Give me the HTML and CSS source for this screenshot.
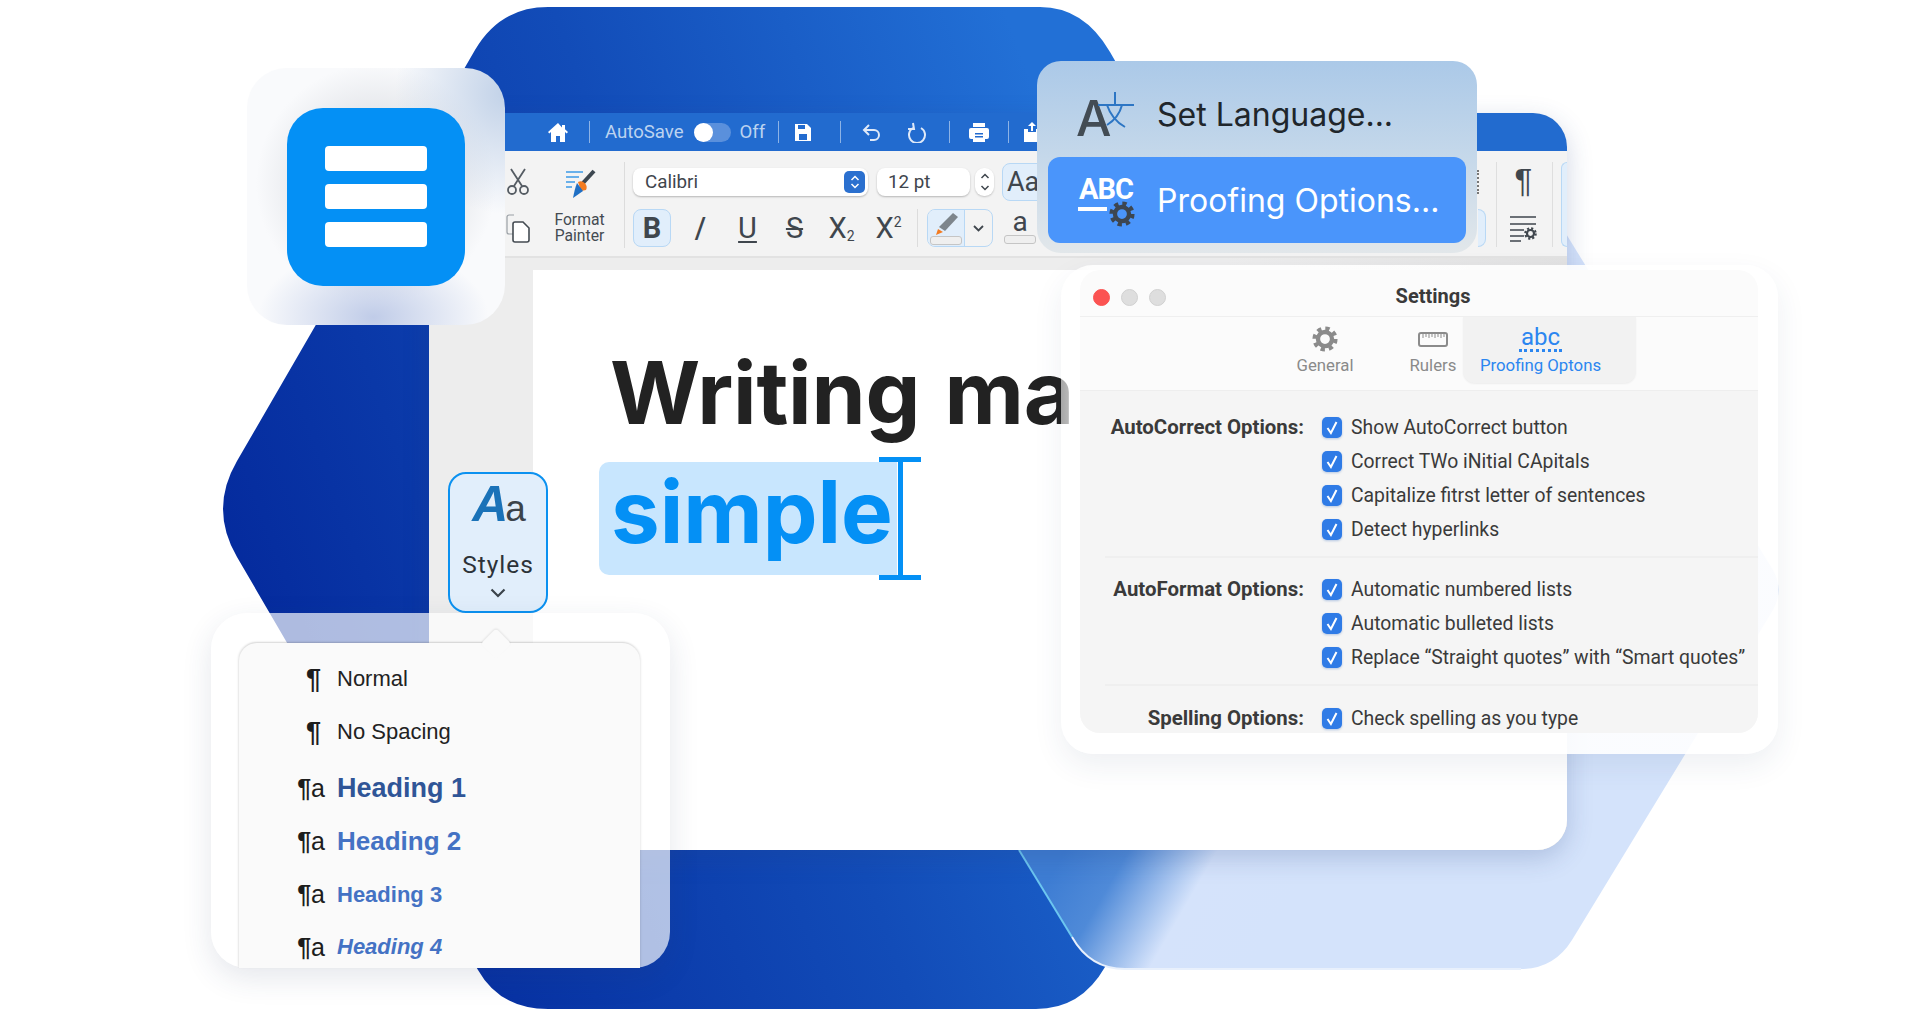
FILE: index.html
```html
<!DOCTYPE html>
<html lang="en">
<head>
    <meta charset="UTF-8">
    <meta name="viewport" content="width=device-width, initial-scale=1.0">
    <title>Writing made simple</title>
    <link rel="stylesheet" href="styles.css">
</head>
<body>
    <svg class="defs" width="0" height="0">
        <symbol id="gear" viewBox="0 0 24 24">
            <circle cx="12" cy="12" r="6.5" fill="none" stroke="currentColor" stroke-width="4"></circle>
            <circle cx="12" cy="12" r="9.6" fill="none" stroke="currentColor" stroke-width="4" stroke-dasharray="3.9 3.64"></circle>
        </symbol>
        <symbol id="check" viewBox="0 0 20 21">
            <rect x="0" y="0" width="20" height="21" rx="5" fill="#2f7be6"></rect>
            <path d="M5.5 11l3.4 5 5.6-11" fill="none" stroke="#fff" stroke-width="2"></path>
        </symbol>
    </svg>

    <div class="stage">
        <svg class="shapes" width="1920" height="1018" viewBox="0 0 1920 1018">
            <defs>
                <linearGradient id="darkHex" gradientUnits="userSpaceOnUse" x1="223" y1="620" x2="1110" y2="300">
                    <stop offset="0" stop-color="#04299c"></stop>
                    <stop offset="0.55" stop-color="#124cb8"></stop>
                    <stop offset="1" stop-color="#2270d6"></stop>
                </linearGradient>
                <linearGradient id="glassHex" gradientUnits="userSpaceOnUse" x1="1060" y1="860" x2="1250" y2="970">
                    <stop offset="0" stop-color="#3e7dd3"></stop>
                    <stop offset="0.25" stop-color="#4f8ad8"></stop>
                    <stop offset="0.6" stop-color="#d5e3fb"></stop>
                    <stop offset="1" stop-color="#d4e3fb"></stop>
                </linearGradient>
            </defs>
            <path fill="url(#darkHex)" d="M548 7L1040 7Q1084 7 1110 52L1350 470L1350 540L1105 967Q1081 1009 1036 1009L548 1009Q500 1009 478 970L237 557Q209 509 237 461L475 50Q500 7 548 7Z"></path>
            <path fill="url(#glassHex)" d="M1560 224L1773 570Q1784 590 1773 610L1572 940Q1554 969 1521 969L1125 969Q1090 969 1072 937L1010 835L1010 224Z"></path>
            <path fill="none" stroke="#6cc6f0" stroke-width="2" d="M1019 850L1072 937"></path>
            <path fill="none" stroke="#e8f0fc" stroke-width="2" d="M1072 937Q1090 969 1125 969L1521 969"></path>
        </svg>

        <div class="window">
            <div class="titlebar">
                <svg class="tb-home" width="22" height="21" viewBox="0 0 22 21"><path fill="#fff" d="M11 1L1 10l1.3 1.5L4 10v10h5v-6h4v6h5V10l1.7 1.5L21 10l-3-2.700V3h-3v2.600z"></path></svg>
                <span class="tb-sep tb-gap-a"></span>
                <span class="tb-label">AutoSave</span>
                <span class="toggle"><span class="toggle-knob"></span></span>
                <span class="tb-label tb-off">Off</span>
                <span class="tb-sep tb-gap-b"></span>
                <svg class="tb-save" width="18" height="19" viewBox="0 0 18 19"><path fill="#fff" d="M1 1h12l4 4v13H1z"></path><path fill="#226bcf" d="M4 2h7v4H4zM5 11h8v6H5z"></path></svg>
                <span class="tb-sep tb-gap-c"></span>
                <svg class="tb-undo" width="22" height="21" viewBox="0 0 22 21"><path fill="none" stroke="#dfe9f8" stroke-width="2" d="M8 3L3 8l5 5M3 8h10a5 5 0 0 1 0 10h-4"></path></svg>
                <svg class="tb-redo" width="22" height="21" viewBox="0 0 22 21"><path fill="none" stroke="#dfe9f8" stroke-width="2" d="M7 6a8 8 0 1 0 8 0M7 1l1 6 -6 0"></path></svg>
                <span class="tb-sep tb-gap-d"></span>
                <svg class="tb-print" width="22" height="21" viewBox="0 0 22 21"><path fill="#fff" d="M5 1h12v4H5zM3 6h16a2 2 0 0 1 2 2v7a2 2 0 0 1-2 2h-2v3H5v-3H3a2 2 0 0 1-2-2V8a2 2 0 0 1 2-2z"></path><path fill="#226bcf" d="M7 11h8v1.500H7zM7 14h8v1.500H7z"></path></svg>
                <span class="tb-sep tb-gap-e"></span>
                <svg class="tb-share" width="20" height="21" viewBox="0 0 20 21"><path fill="#fff" d="M2 7h4v3h8V7h4v13H2zM10 0l4 4h-3v5H9V4H6z"></path></svg>
            </div>

            <div class="ribbon">
                <div class="rb-clipboard">
                    <svg class="rb-scissors" width="22" height="27" viewBox="0 0 22 27" fill="none" stroke="#555c63" stroke-width="1.800"><path d="M4 1l11 17M18 1L7 18"></path><circle cx="5" cy="22" r="4"></circle><circle cx="17" cy="22" r="4"></circle></svg>
                    <svg class="rb-brush" width="32" height="30" viewBox="0 0 32 30"><path stroke="#3c9be8" stroke-width="1.500" d="M1 3h17M1 8h13M1 13h9M1 18h6"></path><path stroke="#3d4750" stroke-width="4" d="M29 2L18 14"></path><path fill="#f47b20" d="M13 13a6 6 0 0 1 8 8l-5 1z"></path><path fill="#1f6fc4" d="M12 14l6 8-10 7c1-5 2-10 4-15z"></path></svg>
                    <svg class="rb-copy" width="24" height="29" viewBox="0 0 24 29"><path fill="none" stroke="#9aa0a6" stroke-width="1.200" d="M8 1H3a2 2 0 0 0-2 2v15a2 2 0 0 0 2 2h4"></path><path fill="#fff" stroke="#444b52" stroke-width="1.600" d="M9 8h8l6 6v12a2 2 0 0 1-2 2H9a2 2 0 0 1-2-2V10a2 2 0 0 1 2-2z"></path></svg>
                    <div class="rb-painter">Format<br>Painter</div>
                </div>

                <div class="rb-font">
                    <div class="rb-row rb-row-top">
                        <div class="font-select">
                            <span>Calibri</span>
                            <span class="select-btn">
                                <svg width="10" height="16" viewBox="0 0 10 16" fill="none" stroke="#fff" stroke-width="1.500"><path d="M1.500 6L5 2.500 8.500 6M1.500 10L5 13.500 8.500 10"></path></svg>
                            </span>
                        </div>
                        <div class="size-select">12 pt</div>
                        <div class="stepper">
                            <svg width="10" height="22" viewBox="0 0 10 22" fill="none" stroke="#3f464d" stroke-width="1.500"><path d="M1.500 7L5 3.500 8.500 7M1.500 15L5 18.500 8.500 15"></path></svg>
                        </div>
                        <div class="case-btn">Aa</div>
                    </div>
                    <div class="rb-row rb-row-bottom">
                        <div class="fmt fmt-bold">B</div>
                        <div class="fmt fmt-italic">/</div>
                        <div class="fmt fmt-under">U</div>
                        <div class="fmt fmt-strike">S</div>
                        <div class="fmt">X<sub>2</sub></div>
                        <div class="fmt">X<sup>2</sup></div>
                        <span class="rb-sep"></span>
                        <div class="highlight">
                            <div class="highlight-pen">
                                <svg width="26" height="25" viewBox="0 0 26 25"><path fill="#7d858c" d="M20 1l5 4-13 14-6-4z"></path><path fill="#f47b20" d="M5 17l5 3-7 3z"></path></svg>
                                <span class="swatch"></span>
                            </div>
                            <div class="highlight-more">
                                <svg width="11" height="7" viewBox="0 0 11 7" fill="none" stroke="#3f464d" stroke-width="1.800"><path d="M1 1l4.500 4.500L10 1"></path></svg>
                            </div>
                        </div>
                        <div class="font-color">a<span class="swatch"></span></div>
                    </div>
                </div>

                <div class="rb-tail">
                    <div class="tail-dots"></div>
                    <div class="tail-btn"></div>
                    <span class="tail-sep"></span>
                    <div class="tail-col">
                        <span class="tail-pilcrow">¶</span>
                        <svg width="28" height="27" viewBox="0 0 28 27"><path stroke="#3f464d" stroke-width="1.500" d="M1 2h26M1 9h26M1 15h14M1 21h14M1 26h11"></path><use href="#gear" x="15" y="12" width="13" height="13" color="#3f464d"></use></svg>
                    </div>
                    <span class="tail-sep"></span>
                    <div class="tail-outline"></div>
                </div>
            </div>

            <div class="workspace">
                <div class="page">
                    <h1 class="doc-title">Writing ma</h1>
                    <div class="doc-line">
                        <span class="selection">simple<span class="caret"></span></span>
                    </div>
                </div>
            </div>
        </div>

        <div class="app-tile">
            <div class="app-icon">
                <span class="app-bar"></span>
                <span class="app-bar"></span>
                <span class="app-bar"></span>
            </div>
        </div>

        <div class="lang-menu">
            <div class="menu-item menu-item-plain">
                <span class="menu-icon">
                    <span class="translate-a">A</span>
                    <svg class="translate-mark" width="40" height="40" viewBox="0 0 40 40" fill="none" stroke="#2d76c4" stroke-width="2"><path d="M19 2v13M2 15h36M11 15c3 9 9 17 18 22M26 15c-2 8-7 15-15 20"></path></svg>
                </span>
                <span>Set Language...</span>
            </div>
            <div class="menu-item menu-item-active">
                <span class="menu-icon">
                    <span class="abc-text">ABC</span>
                    <span class="abc-rule"></span>
                    <svg class="abc-gear" width="26" height="26"><use href="#gear" width="26" height="26" color="#3d4650"></use></svg>
                </span>
                <span>Proofing Options...</span>
            </div>
        </div>

        <div class="settings">
            <div class="settings-inner">
                <div class="settings-title">
                    <div class="lights">
                        <span class="light light-red"></span>
                        <span class="light"></span>
                        <span class="light"></span>
                    </div>
                    <span>Settings</span>
                </div>
                <div class="tabs">
                    <div class="tab tab-general">
                        <svg width="26" height="26"><use href="#gear" width="26" height="26" color="#8b8b8b"></use></svg>
                        <span>General</span>
                    </div>
                    <div class="tab tab-rulers">
                        <svg width="30" height="26" viewBox="0 0 30 26" fill="none" stroke="#8b8b8b"><rect x="1" y="7" width="28" height="13" rx="2" stroke-width="2"></rect><path stroke-width="1" d="M5 8v4M8 8v3M11 8v4M14 8v3M17 8v4M20 8v3M23 8v4M26 8v3"></path></svg>
                        <span>Rulers</span>
                    </div>
                    <div class="tab tab-proofing">
                        <div class="abc-tab">abc</div>
                        <span>Proofing Optons</span>
                    </div>
                </div>
                <div class="options">
                    <section class="opt-group opt-first">
                        <div class="opt-label">AutoCorrect Options:</div>
                        <div class="opt-list">
                            <div class="opt"><svg class="tick"><use href="#check"></use></svg>Show AutoCorrect button</div>
                            <div class="opt"><svg class="tick"><use href="#check"></use></svg>Correct TWo iNitial CApitals</div>
                            <div class="opt"><svg class="tick"><use href="#check"></use></svg>Capitalize fitrst letter of sentences</div>
                            <div class="opt"><svg class="tick"><use href="#check"></use></svg>Detect hyperlinks</div>
                        </div>
                    </section>
                    <section class="opt-group opt-second">
                        <div class="opt-label">AutoFormat Options:</div>
                        <div class="opt-list">
                            <div class="opt"><svg class="tick"><use href="#check"></use></svg>Automatic numbered lists</div>
                            <div class="opt"><svg class="tick"><use href="#check"></use></svg>Automatic bulleted lists</div>
                            <div class="opt"><svg class="tick"><use href="#check"></use></svg>Replace “Straight quotes” with “Smart quotes”</div>
                        </div>
                    </section>
                    <section class="opt-group opt-third">
                        <div class="opt-label">Spelling Options:</div>
                        <div class="opt-list">
                            <div class="opt"><svg class="tick"><use href="#check"></use></svg>Check spelling as you type</div>
                        </div>
                    </section>
                </div>
            </div>
        </div>

        <div class="styles-btn">
            <div class="styles-aa"><span class="big-a">A</span><span class="small-a">a</span></div>
            <div class="styles-label">Styles</div>
            <svg width="16" height="10" viewBox="0 0 16 10" fill="none" stroke="#3b434a" stroke-width="2.200"><path d="M1.500 1.500L8 8l6.500-6.500"></path></svg>
        </div>

        <div class="styles-pop">
            <div class="styles-card">
                <span class="card-arrow"></span>
                <div class="style-row"><span class="mark mark-plain"><b>¶</b></span><span class="st-normal">Normal</span></div>
                <div class="style-row"><span class="mark mark-plain"><b>¶</b></span><span class="st-normal">No Spacing</span></div>
                <div class="style-row style-row-first"><span class="mark"><b>¶</b>a</span><span class="st-h1">Heading 1</span></div>
                <div class="style-row"><span class="mark"><b>¶</b>a</span><span class="st-h2">Heading 2</span></div>
                <div class="style-row"><span class="mark"><b>¶</b>a</span><span class="st-h3">Heading 3</span></div>
                <div class="style-row"><span class="mark"><b>¶</b>a</span><span class="st-h4">Heading 4</span></div>
            </div>
        </div>
    </div>
</body>
</html>
```

FILE: styles.css
```css
* {
    margin: 0;
    padding: 0;
    box-sizing: border-box;
}

body {
    font-family: Roboto, "Liberation Sans", sans-serif;
    background: #ffffff;
    color: #222222;
    overflow: hidden;
}

.defs {
    position: absolute;
}

.stage {
    position: relative;
    width: 1920px;
    height: 1018px;
    overflow: hidden;
}

.shapes {
    position: absolute;
    top: 0;
    left: 0;
}

/* document window */
.window {
    position: absolute;
    left: 429px;
    top: 113px;
    width: 1138px;
    height: 737px;
    display: flex;
    flex-direction: column;
    background: #ececec;
    border-radius: 0 34px 30px 0;
    box-shadow: 0 8px 26px rgba(40, 70, 130, 0.22);
}

.titlebar {
    height: 38px;
    display: flex;
    align-items: center;
    padding-left: 118px;
    background: #226bcf;
    border-radius: 0 34px 0 0;
}

.tb-sep {
    width: 1px;
    height: 22px;
    background: #8db3e6;
}

.tb-gap-a { margin-left: 20px; }
.tb-gap-b { margin-left: 13px; }
.tb-gap-c { margin-left: 28px; }
.tb-gap-d { margin-left: 21px; }
.tb-gap-e { margin-left: 18px; }

.tb-label {
    font-size: 18.600px;
    color: #bcd3f0;
    margin-left: 15px;
}

.tb-off {
    margin-left: 9px;
}

.toggle {
    width: 37px;
    height: 19px;
    margin-left: 10px;
    border-radius: 10px;
    background: #5a90dc;
}

.toggle-knob {
    display: block;
    width: 19px;
    height: 19px;
    border-radius: 50%;
    background: #ffffff;
}

.tb-save { margin-left: 15px; }
.tb-undo { margin-left: 20px; }
.tb-redo { margin-left: 23px; }
.tb-print { margin-left: 18px; }
.tb-share { margin-left: 13px; }

/* ribbon */
.ribbon {
    height: 107px;
    display: flex;
    padding-left: 76px;
    background: #f3f3f3;
    border-bottom: 2px solid #e2e2e2;
    color: #3f464d;
}

.rb-clipboard {
    width: 120px;
    height: 86px;
    margin-top: 11px;
    flex: none;
    display: grid;
    grid-template-columns: 26px 94px;
    grid-template-rows: 1fr 1fr;
    justify-items: center;
    align-items: center;
    border-right: 1px solid #dcdcdc;
}

.rb-scissors {
    margin-bottom: 4px;
}

.rb-brush {
    margin-left: 6px;
}

.rb-copy {
    margin-top: 3px;
}

.rb-painter {
    font-size: 15.700px;
    line-height: 16px;
    text-align: center;
    color: #444b52;
    margin-top: 2px;
    margin-left: 3px;
}

.rb-font {
    margin-left: 8px;
    width: 419px;
    flex: none;
}

.rb-row {
    display: flex;
    align-items: center;
}

.rb-row > * {
    flex: none;
}

.rb-row-top {
    height: 38px;
    margin-top: 12px;
}

.rb-row-bottom {
    margin-top: 8px;
    height: 38px;
}

.font-select {
    width: 235px;
    height: 28px;
    display: flex;
    align-items: center;
    justify-content: space-between;
    padding: 0 3px 0 12px;
    font-size: 18.800px;
    background: #ffffff;
    border-radius: 8px;
    box-shadow: 0 1px 2px rgba(0, 0, 0, 0.25);
}

.select-btn {
    width: 21px;
    height: 22px;
    display: flex;
    align-items: center;
    justify-content: center;
    background: #2b70cf;
    border-radius: 5px;
}

.size-select {
    width: 93px;
    height: 28px;
    margin-left: 9px;
    padding-left: 11px;
    font-size: 18.800px;
    line-height: 28px;
    background: #ffffff;
    border-radius: 8px;
    box-shadow: 0 1px 2px rgba(0, 0, 0, 0.25);
}

.stepper {
    width: 19px;
    height: 28px;
    margin-left: 5px;
    display: flex;
    align-items: center;
    justify-content: center;
    background: #ffffff;
    border-radius: 9px;
    box-shadow: 0 1px 2px rgba(0, 0, 0, 0.2);
}

.case-btn {
    width: 50px;
    height: 38px;
    margin-left: 8px;
    padding-left: 4px;
    font-size: 27px;
    line-height: 36px;
    background: #e1eefb;
    border: 1px solid #b8d8f5;
    border-radius: 8px;
}

.fmt {
    width: 47px;
    text-align: center;
    font-size: 29px;
    line-height: 38px;
}

.fmt sub,
.fmt sup {
    font-size: 14px;
    line-height: 0;
}

.fmt sub {
    vertical-align: -3px;
}

.fmt-bold {
    width: 38px;
    margin-right: 6px;
    font-weight: 700;
    background: #e1eefb;
    border: 1px solid #b8d8f5;
    border-radius: 8px;
    line-height: 36px;
}

.fmt-italic {
    font-weight: 500;
}

.fmt-under {
    text-decoration: underline;
    text-decoration-thickness: 2px;
    text-underline-offset: 3px;
}

.fmt-strike {
    text-decoration: line-through;
    text-decoration-thickness: 2px;
}

.rb-sep {
    width: 1px;
    height: 38px;
    margin-left: 5px;
    background: #dcdcdc;
}

.highlight {
    width: 66px;
    height: 38px;
    margin-left: 9px;
    display: flex;
    border: 1px solid #b8d8f5;
    border-radius: 8px;
    overflow: hidden;
}

.highlight-pen {
    width: 37px;
    padding: 2px 2px 0;
    display: flex;
    flex-direction: column;
    align-items: center;
    background: #e1eefb;
    border-right: 1px solid #b8d8f5;
}

.highlight-pen .swatch {
    margin-top: -1px;
}

.swatch {
    display: block;
    width: 32px;
    height: 9px;
    background: #efefef;
    border: 1px solid #c5c5c5;
    border-radius: 3px;
}

.highlight-more {
    flex: 1;
    display: flex;
    align-items: center;
    justify-content: center;
}

.font-color {
    width: 34px;
    margin-left: 10px;
    display: flex;
    flex-direction: column;
    align-items: center;
    font-size: 28px;
    line-height: 27px;
    margin-top: -4px;
}

.rb-tail {
    position: relative;
    display: flex;
    margin-left: auto;
    width: 90px;
    height: 85px;
    margin-top: 11px;
    flex: none;
}

.tail-dots {
    width: 1px;
    height: 24px;
    margin-top: 8px;
    border-left: 2px dotted #777777;
}

.tail-btn {
    width: 8px;
    height: 38px;
    margin-top: 47px;
    margin-left: -1px;
    background: #e1eefb;
    border: 1px solid #b8d8f5;
    border-left: 0;
    border-radius: 0 8px 8px 0;
}

.tail-sep {
    width: 1px;
    height: 85px;
    margin-left: 10px;
    background: #dedede;
}

.tail-col {
    width: 51px;
    padding: 0 0 5px 4px;
    display: flex;
    flex-direction: column;
    align-items: center;
    justify-content: space-between;
}

.tail-pilcrow {
    font-family: "Liberation Sans", sans-serif;
    font-size: 33px;
    line-height: 38px;
}

.tail-sep + .tail-col + .tail-sep {
    margin-left: 6px;
}

.tail-outline {
    width: 6px;
    margin-left: 8px;
    background: #e1eefb;
    border: 1px solid #b8d8f5;
    border-right: 0;
    border-radius: 8px 0 0 8px;
}

/* page */
.workspace {
    flex: 1;
    padding: 12px 0 0 104px;
    min-height: 0;
    background: linear-gradient(90deg, #ededed 70%, #e2e2e2 100%);
    border-radius: 0 0 30px 0;
}

.page {
    height: 100%;
    padding-left: 77px;
    background: #ffffff;
    border-radius: 0 0 30px 0;
}

.doc-title {
    font-family: Inter, sans-serif;
    font-size: 87px;
    font-weight: 700;
    line-height: 100px;
    letter-spacing: -0.200px;
    word-spacing: 4px;
    padding-top: 73px;
    color: #222222;
}

.doc-line {
    margin: 19px 0 0 -11px;
}

.selection {
    position: relative;
    display: block;
    width: 298px;
    height: 113px;
    padding-left: 12px;
    font-family: Inter, sans-serif;
    font-size: 87px;
    font-weight: 700;
    line-height: 100px;
    color: #0490f5;
    background: #c8e6fe;
    border-radius: 10px 0 0 10px;
}

.caret {
    position: absolute;
    left: 299px;
    top: -5px;
    width: 5px;
    height: 123px;
    background: #0490f5;
}

.caret::before,
.caret::after {
    content: "";
    position: absolute;
    left: -19px;
    width: 42px;
    height: 5px;
    background: #0490f5;
}

.caret::before { top: 0; }
.caret::after { bottom: 0; }

/* app tile */
.app-tile {
    position: absolute;
    left: 247px;
    top: 68px;
    width: 258px;
    height: 257px;
    display: flex;
    align-items: center;
    justify-content: center;
    padding-right: 1px;
    border-radius: 40px;
    background:
        radial-gradient(ellipse 115px 70px at 49% 97%, #c0cce8 0%, rgba(192, 204, 232, 0) 100%),
        radial-gradient(ellipse 110px 120px at 100% 10%, #c2d2e8 0%, rgba(194, 210, 232, 0) 100%),
        radial-gradient(ellipse 120px 120px at 50% 45%, #e6e8ec 60%, rgba(230, 232, 236, 0) 100%),
        #f9fafc;
}

.app-icon {
    width: 178px;
    height: 178px;
    display: flex;
    flex-direction: column;
    align-items: center;
    justify-content: center;
    gap: 13px;
    background: #0490f5;
    border-radius: 36px;
}

.app-bar {
    width: 102px;
    height: 25px;
    background: #ffffff;
    border-radius: 4px;
}

/* language menu */
.lang-menu {
    position: absolute;
    left: 1037px;
    top: 61px;
    width: 440px;
    height: 192px;
    padding: 9px 11px 10px;
    font-family: Inter, sans-serif;
    font-size: 32px;
    color: #20262b;
    background: linear-gradient(180deg, #abc9e8 0%, #c5d8ea 50%, #e2e7ea 100%);
    border-radius: 24px;
}

.menu-item {
    height: 87px;
    display: flex;
    align-items: center;
    gap: 24px;
    padding-left: 30px;
}

.menu-item-plain {
    padding-top: 2px;
}

.menu-item-active {
    height: 86px;
    color: #ffffff;
    background: #4a95fb;
    border-radius: 12px;
}

.menu-icon {
    position: relative;
    width: 55px;
    height: 50px;
    flex: none;
}

.translate-a {
    position: absolute;
    left: -2px;
    top: 0;
    font-size: 50px;
    line-height: 56px;
    font-weight: 500;
    color: #434c54;
}

.translate-mark {
    position: absolute;
    left: 18px;
    top: 0;
}

.abc-text {
    position: absolute;
    left: 1px;
    top: -3px;
    font-family: Roboto, sans-serif;
    font-size: 29px;
    line-height: 34px;
    font-weight: 700;
    letter-spacing: -1px;
    color: #ffffff;
}

.abc-rule {
    position: absolute;
    left: 0;
    top: 32px;
    width: 29px;
    height: 4px;
    background: #ffffff;
}

.abc-gear {
    position: absolute;
    left: 31px;
    top: 26px;
}

/* settings window */
.settings {
    position: absolute;
    left: 1061px;
    top: 265px;
    width: 717px;
    height: 489px;
    padding: 5px 20px 21px 19px;
    background: linear-gradient(90deg, rgba(255, 255, 255, 0.6) 0, rgba(255, 255, 255, 0.9) 30px);
    border-radius: 32px;
    box-shadow: 0 12px 30px rgba(40, 60, 100, 0.08);
}

.settings-inner {
    height: 100%;
    display: flex;
    flex-direction: column;
    background: #fbfbfb;
    border-radius: 20px 20px 20px 20px;
    overflow: hidden;
}

.settings-title {
    position: relative;
    height: 47px;
    flex: none;
    display: flex;
    align-items: center;
    justify-content: center;
    padding: 5px 0 0 28px;
    font-size: 20px;
    font-weight: 700;
    color: #3a3a3a;
    border-bottom: 1px solid #efefef;
}

.lights {
    position: absolute;
    left: 13px;
    top: 19px;
    display: flex;
    gap: 11px;
}

.light {
    width: 17px;
    height: 17px;
    border-radius: 50%;
    background: #dedede;
    border: 1px solid #d0d0d0;
}

.light-red {
    background: #fb5352;
    border-color: #fb5352;
}

.tabs {
    position: relative;
    height: 74px;
    flex: none;
    font-size: 16.800px;
    color: #8a8a8a;
    border-bottom: 1px solid #eeeeee;
}

.tab {
    position: absolute;
    top: 0;
    height: 66px;
    display: flex;
    flex-direction: column;
    align-items: center;
    justify-content: flex-end;
    gap: 3px;
    padding-bottom: 8px;
}

.tab-general {
    left: 199px;
    width: 92px;
}

.tab-rulers {
    left: 316px;
    width: 74px;
}

.tab-proofing {
    left: 383px;
    width: 173px;
    padding-right: 18px;
    color: #2b86f0;
    background: #f2f2f2;
    border-radius: 0 0 12px 12px;
    box-shadow: 0 1px 2px rgba(0, 0, 0, 0.06);
}

.abc-tab {
    font-size: 24px;
    line-height: 24px;
    padding: 0 2px;
    border-bottom: 3px dotted #2b86f0;
}

.options {
    flex: 1;
    min-height: 0;
    background: #f5f5f5;
    font-size: 19.350px;
    color: #3a3a3a;
}

.opt-group {
    display: grid;
    grid-template-columns: 224px 1fr;
    column-gap: 18px;
    margin-left: 25px;
    border-bottom: 2px solid #efefef;
}

.opt-group .opt-label {
    margin-left: -25px;
    font-size: 20.400px;
    line-height: 34px;
    text-align: right;
    font-weight: 700;
    white-space: nowrap;
}

.opt-first {
    padding: 19px 0 10px;
    grid-template-columns: 199px 1fr;
}

.opt-second {
    padding: 14px 0 10px;
    grid-template-columns: 199px 1fr;
}

.opt-third {
    padding: 15px 0 0;
    grid-template-columns: 199px 1fr;
    border-bottom: 0;
}

.opt {
    height: 34px;
    display: flex;
    align-items: center;
    gap: 9px;
    white-space: nowrap;
}

.tick {
    width: 20px;
    height: 21px;
    flex: none;
    filter: drop-shadow(0 1px 1px rgba(30, 90, 180, 0.3));
}

/* styles button and its popover */
.styles-btn {
    position: absolute;
    left: 448px;
    top: 472px;
    width: 100px;
    height: 141px;
    display: flex;
    flex-direction: column;
    align-items: center;
    background: #e1eefb;
    border: 2.500px solid #0b91f0;
    border-radius: 18px;
}

.styles-aa {
    height: 52px;
    margin-top: 4px;
    padding-left: 2px;
    line-height: 52px;
    font-family: "Liberation Sans", sans-serif;
}

.big-a {
    font-size: 50px;
    font-style: italic;
    font-weight: 700;
    letter-spacing: -3px;
    color: #1a72b8;
}

.small-a {
    font-size: 37px;
    color: #3b434a;
}

.styles-label {
    margin-top: 20px;
    font-size: 24.500px;
    line-height: 30px;
    letter-spacing: 1px;
    color: #2c3238;
}

.styles-btn svg {
    margin-top: 8px;
}

.styles-pop {
    position: absolute;
    left: 211px;
    top: 613px;
    width: 459px;
    height: 355px;
    padding: 30px 30px 0 28px;
    background: rgba(255, 255, 255, 0.68);
    border-radius: 36px;
    box-shadow: 0 10px 30px rgba(40, 60, 100, 0.12);
}

.styles-card {
    position: relative;
    height: 325px;
    padding-top: 10px;
    font-family: "Liberation Sans", sans-serif;
    background: #fafafa;
    border-radius: 18px 18px 0 0;
    box-shadow: -1px -1px 2px rgba(0, 0, 0, 0.1), 1px -1px 2px rgba(0, 0, 0, 0.08);
}

.card-arrow {
    position: absolute;
    left: 246px;
    top: -10px;
    width: 22px;
    height: 22px;
    background: #fafafa;
    border-radius: 4px;
    box-shadow: -1px -1px 2px rgba(0, 0, 0, 0.08);
    transform: rotate(45deg);
}

.style-row {
    position: relative;
    height: 52.800px;
    display: flex;
    align-items: center;
}

.style-row-first {
    margin-top: 4px;
}

.mark {
    width: 98px;
    padding-right: 12px;
    text-align: right;
    font-size: 25px;
    color: #1d1d1d;
}

.mark-plain {
    padding-right: 16px;
    font-size: 27px;
}

.st-normal {
    font-size: 22px;
    color: #222222;
}

.st-h1,
.st-h2,
.st-h3,
.st-h4 {
    font-weight: 700;
    color: #4472c4;
}

.st-h1 {
    font-size: 27px;
    color: #2f5597;
}

.st-h2 {
    font-size: 26px;
}

.st-h3 {
    font-size: 22px;
}

.st-h4 {
    font-size: 22px;
    font-style: italic;
}
```
